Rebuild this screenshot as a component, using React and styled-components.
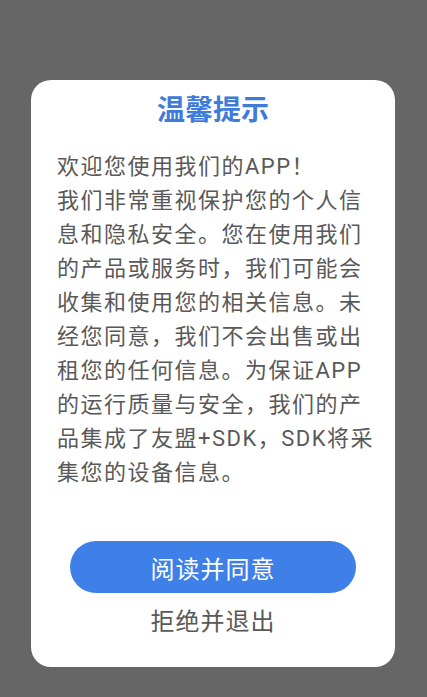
import React from "react";
import styled, { createGlobalStyle } from "styled-components";

const GlobalStyle = createGlobalStyle`
  html, body {
    margin: 0;
    padding: 0;
    background: #666666;
  }
  body {
    font-family: Roboto, "Noto Sans CJK SC", sans-serif;
  }
`;

const Screen = styled.div`
  width: 427px;
  height: 697px;
  padding-top: 80px;
  box-sizing: border-box;
  background: #666666;
`;

const Dialog = styled.div`
  width: 364px;
  margin-left: 31px;
  box-sizing: border-box;
  background: #ffffff;
  border-radius: 20px;
  padding: 12px 20px 28px 26px;
  display: flex;
  flex-direction: column;
  align-items: center;
`;

const Title = styled.h2`
  margin: 0 0 0 -6px;
  font-size: 28px;
  line-height: 38px;
  font-weight: 700;
  color: #3f7bd8;
  text-align: center;
`;

const Message = styled.p`
  margin: 20px 0 0;
  width: 100%;
  font-size: 22px;
  line-height: 34px;
  letter-spacing: 1.5px;
  color: #595959;
`;

const AgreeButton = styled.button`
  margin: 51px 0 0 -6px;
  width: 286px;
  height: 52px;
  border: none;
  border-radius: 26px;
  background: #3e80e8;
  color: #ffffff;
  font-family: inherit;
  font-size: 24px;
  letter-spacing: 1px;
  cursor: pointer;
`;

const RejectLink = styled.button`
  margin: 12px 0 0 -6px;
  border: none;
  background: none;
  padding: 0;
  font-family: inherit;
  font-size: 24px;
  line-height: 34px;
  letter-spacing: 1px;
  color: #595959;
  cursor: pointer;
`;

export default function App() {
  return (
    <>
      <GlobalStyle />
      <Screen>
        <Dialog>
          <Title>温馨提示</Title>
          <Message>
            欢迎您使用我们的APP！
            <br />
            我们非常重视保护您的个人信息和隐私安全。您在使用我们的产品或服务时，我们可能会收集和使用您的相关信息。未经您同意，我们不会出售或出租您的任何信息。为保证APP的运行质量与安全，我们的产品集成了友盟+SDK，SDK将采集您的设备信息。
          </Message>
          <AgreeButton>阅读并同意</AgreeButton>
          <RejectLink>拒绝并退出</RejectLink>
        </Dialog>
      </Screen>
    </>
  );
}
